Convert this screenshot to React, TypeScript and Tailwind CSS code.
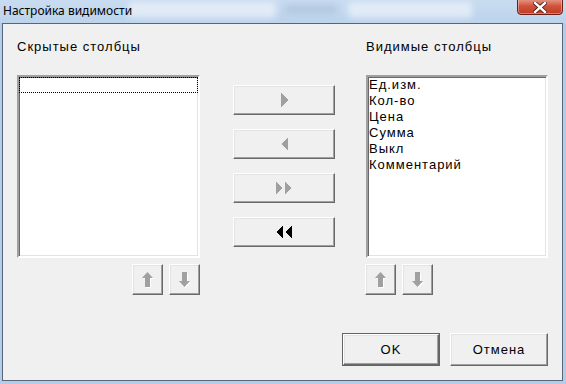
const sunken =
  'border-2 border-t-[#a0a0a0] border-l-[#a0a0a0] border-b-white border-r-white shadow-[inset_1px_1px_0_#696969,inset_-1px_-1px_0_#e3e3e3] bg-white';
const raised =
  'flex items-center justify-center bg-[#f0f0f0] border border-t-white border-l-white border-b-[#696969] border-r-[#696969] shadow-[inset_-1px_-1px_0_#a0a0a0,inset_1px_1px_0_#e3e3e3]';

const visibleCols = ['Ед.изм.', 'Кол-во', 'Цена', 'Сумма', 'Выкл', 'Комментарий'];

function Tri({ dir, color, w = 7, h = 14 }: { dir: 'l' | 'r'; color: string; w?: number; h?: number }) {
  const pts = dir === 'r' ? `0,0 ${w},${h / 2} 0,${h}` : `${w},0 0,${h / 2} ${w},${h}`;
  return (
    <svg width={w} height={h} viewBox={`0 0 ${w} ${h}`} shapeRendering="crispEdges">
      <polygon points={pts} fill={color} />
    </svg>
  );
}

function DoubleTri({ dir, color }: { dir: 'l' | 'r'; color: string }) {
  return (
    <div className="flex gap-[2px]">
      <Tri dir={dir} color={color} w={7} h={12} />
      <Tri dir={dir} color={color} w={7} h={12} />
    </div>
  );
}

// disabled up/down arrow with the etched white shadow
function MoveArrow({ up }: { up: boolean }) {
  const d = up
    ? 'M5.5 0 L11 6 L8 6 L8 15 L3 15 L3 6 L0 6 Z'
    : 'M3 0 L8 0 L8 9 L11 9 L5.5 15 L0 9 L3 9 Z';
  return (
    <svg width="12" height="16" viewBox="0 0 12 16">
      <path d={d} fill="#ffffff" transform="translate(1 1)" />
      <path d={d} fill="#a0a0a0" />
    </svg>
  );
}

function MoveButtons({ className }: { className: string }) {
  return (
    <div className={`flex gap-[6px] mt-[6px] ${className}`}>
      <div className={`${raised} w-[31px] h-[31px]`}>
        <MoveArrow up />
      </div>
      <div className={`${raised} w-[31px] h-[31px]`}>
        <MoveArrow up={false} />
      </div>
    </div>
  );
}

function TitleBar() {
  return (
    <div className="relative h-[23px] shrink-0 bg-gradient-to-b from-[#c9dcf1] to-[#bcd3ec] overflow-hidden">
      {/* blurred stuff behind the glass */}
      <div className="absolute left-[128px] top-[2px] w-[148px] h-[16px] rounded bg-white/50 blur-[3px]" />
      <div className="absolute left-[285px] top-[4px] w-[52px] h-[10px] rounded bg-[#9fb4cc]/40 blur-[3px]" />
      <div className="absolute left-[348px] top-[2px] w-[124px] h-[16px] rounded bg-white/50 blur-[3px]" />
      <div className="relative pl-[3px] pt-[3px] text-[12px] leading-[16px] text-black font-['Noto_Sans',sans-serif]">
        Настройка видимости
      </div>
      <div className="absolute left-[517px] top-[-3px] w-[46px] h-[18px] rounded-b-[4px] border border-[#6b1f16] bg-gradient-to-b from-[#e8a593] via-[#d0533c] to-[#c23a20] flex items-center justify-center pt-[3px] shadow-[inset_0_0_0_1px_rgba(255,255,255,0.35)]">
        <svg width="14" height="11" viewBox="0 0 14 11">
          <path d="M2 1 L12 10 M12 1 L2 10" stroke="#4a1a12" strokeWidth="4" strokeLinecap="square" />
          <path d="M2 1 L12 10 M12 1 L2 10" stroke="#ffffff" strokeWidth="2.4" strokeLinecap="square" />
        </svg>
      </div>
    </div>
  );
}

export default function App() {
  return (
    <div className="w-[566px] h-[384px] flex flex-col bg-[#b4cce8] overflow-hidden font-['Liberation_Sans',Arial,sans-serif] text-black">
      <TitleBar />
      <div className="flex-1 ml-[2px] mr-[3px] mb-[3px] border border-[#56667a] bg-[#f0f0f0] flex flex-col">
        <div className="flex items-start pl-[14px] pt-[15px]">
          {/* hidden columns */}
          <div className="w-[183px] flex flex-col">
            <div className="h-[16px] leading-[16px] text-[13px] tracking-[1px]">Скрытые столбцы</div>
            <div className={`${sunken} mt-[20px] h-[183px]`}>
              <div className="h-[16px] border border-dotted border-black" />
            </div>
            <MoveButtons className="justify-end" />
          </div>

          {/* move buttons */}
          <div className="ml-[33px] w-[102px] mt-[46px] flex flex-col gap-[14px]">
            <div className={`${raised} h-[30px]`}>
              <Tri dir="r" color="#a0a0a0" />
            </div>
            <div className={`${raised} h-[30px]`}>
              <Tri dir="l" color="#a0a0a0" />
            </div>
            <div className={`${raised} h-[30px]`}>
              <DoubleTri dir="r" color="#a0a0a0" />
            </div>
            <div className={`${raised} h-[30px]`}>
              <DoubleTri dir="l" color="#000000" />
            </div>
          </div>

          {/* visible columns */}
          <div className="ml-[31px] w-[182px] flex flex-col">
            <div className="h-[16px] leading-[16px] text-[13px] tracking-[1px]">Видимые столбцы</div>
            <div className={`${sunken} mt-[20px] h-[183px]`}>
              {visibleCols.map((c) => (
                <div key={c} className="h-[16px] leading-[16px] pl-[1px] text-[13px] tracking-[1px]">
                  {c}
                </div>
              ))}
            </div>
            <MoveButtons className="justify-start -ml-[1px]" />
          </div>
        </div>

        <div className="flex justify-end gap-[10px] pr-[14px] mt-[38px]">
          <div className="border border-[#646464]">
            <div className={`${raised} w-[96px] h-[31px] text-[13px] tracking-[1px]`}>OK</div>
          </div>
          <div className={`${raised} w-[98px] h-[33px] text-[13px] tracking-[1px]`}>Отмена</div>
        </div>
      </div>
    </div>
  );
}
